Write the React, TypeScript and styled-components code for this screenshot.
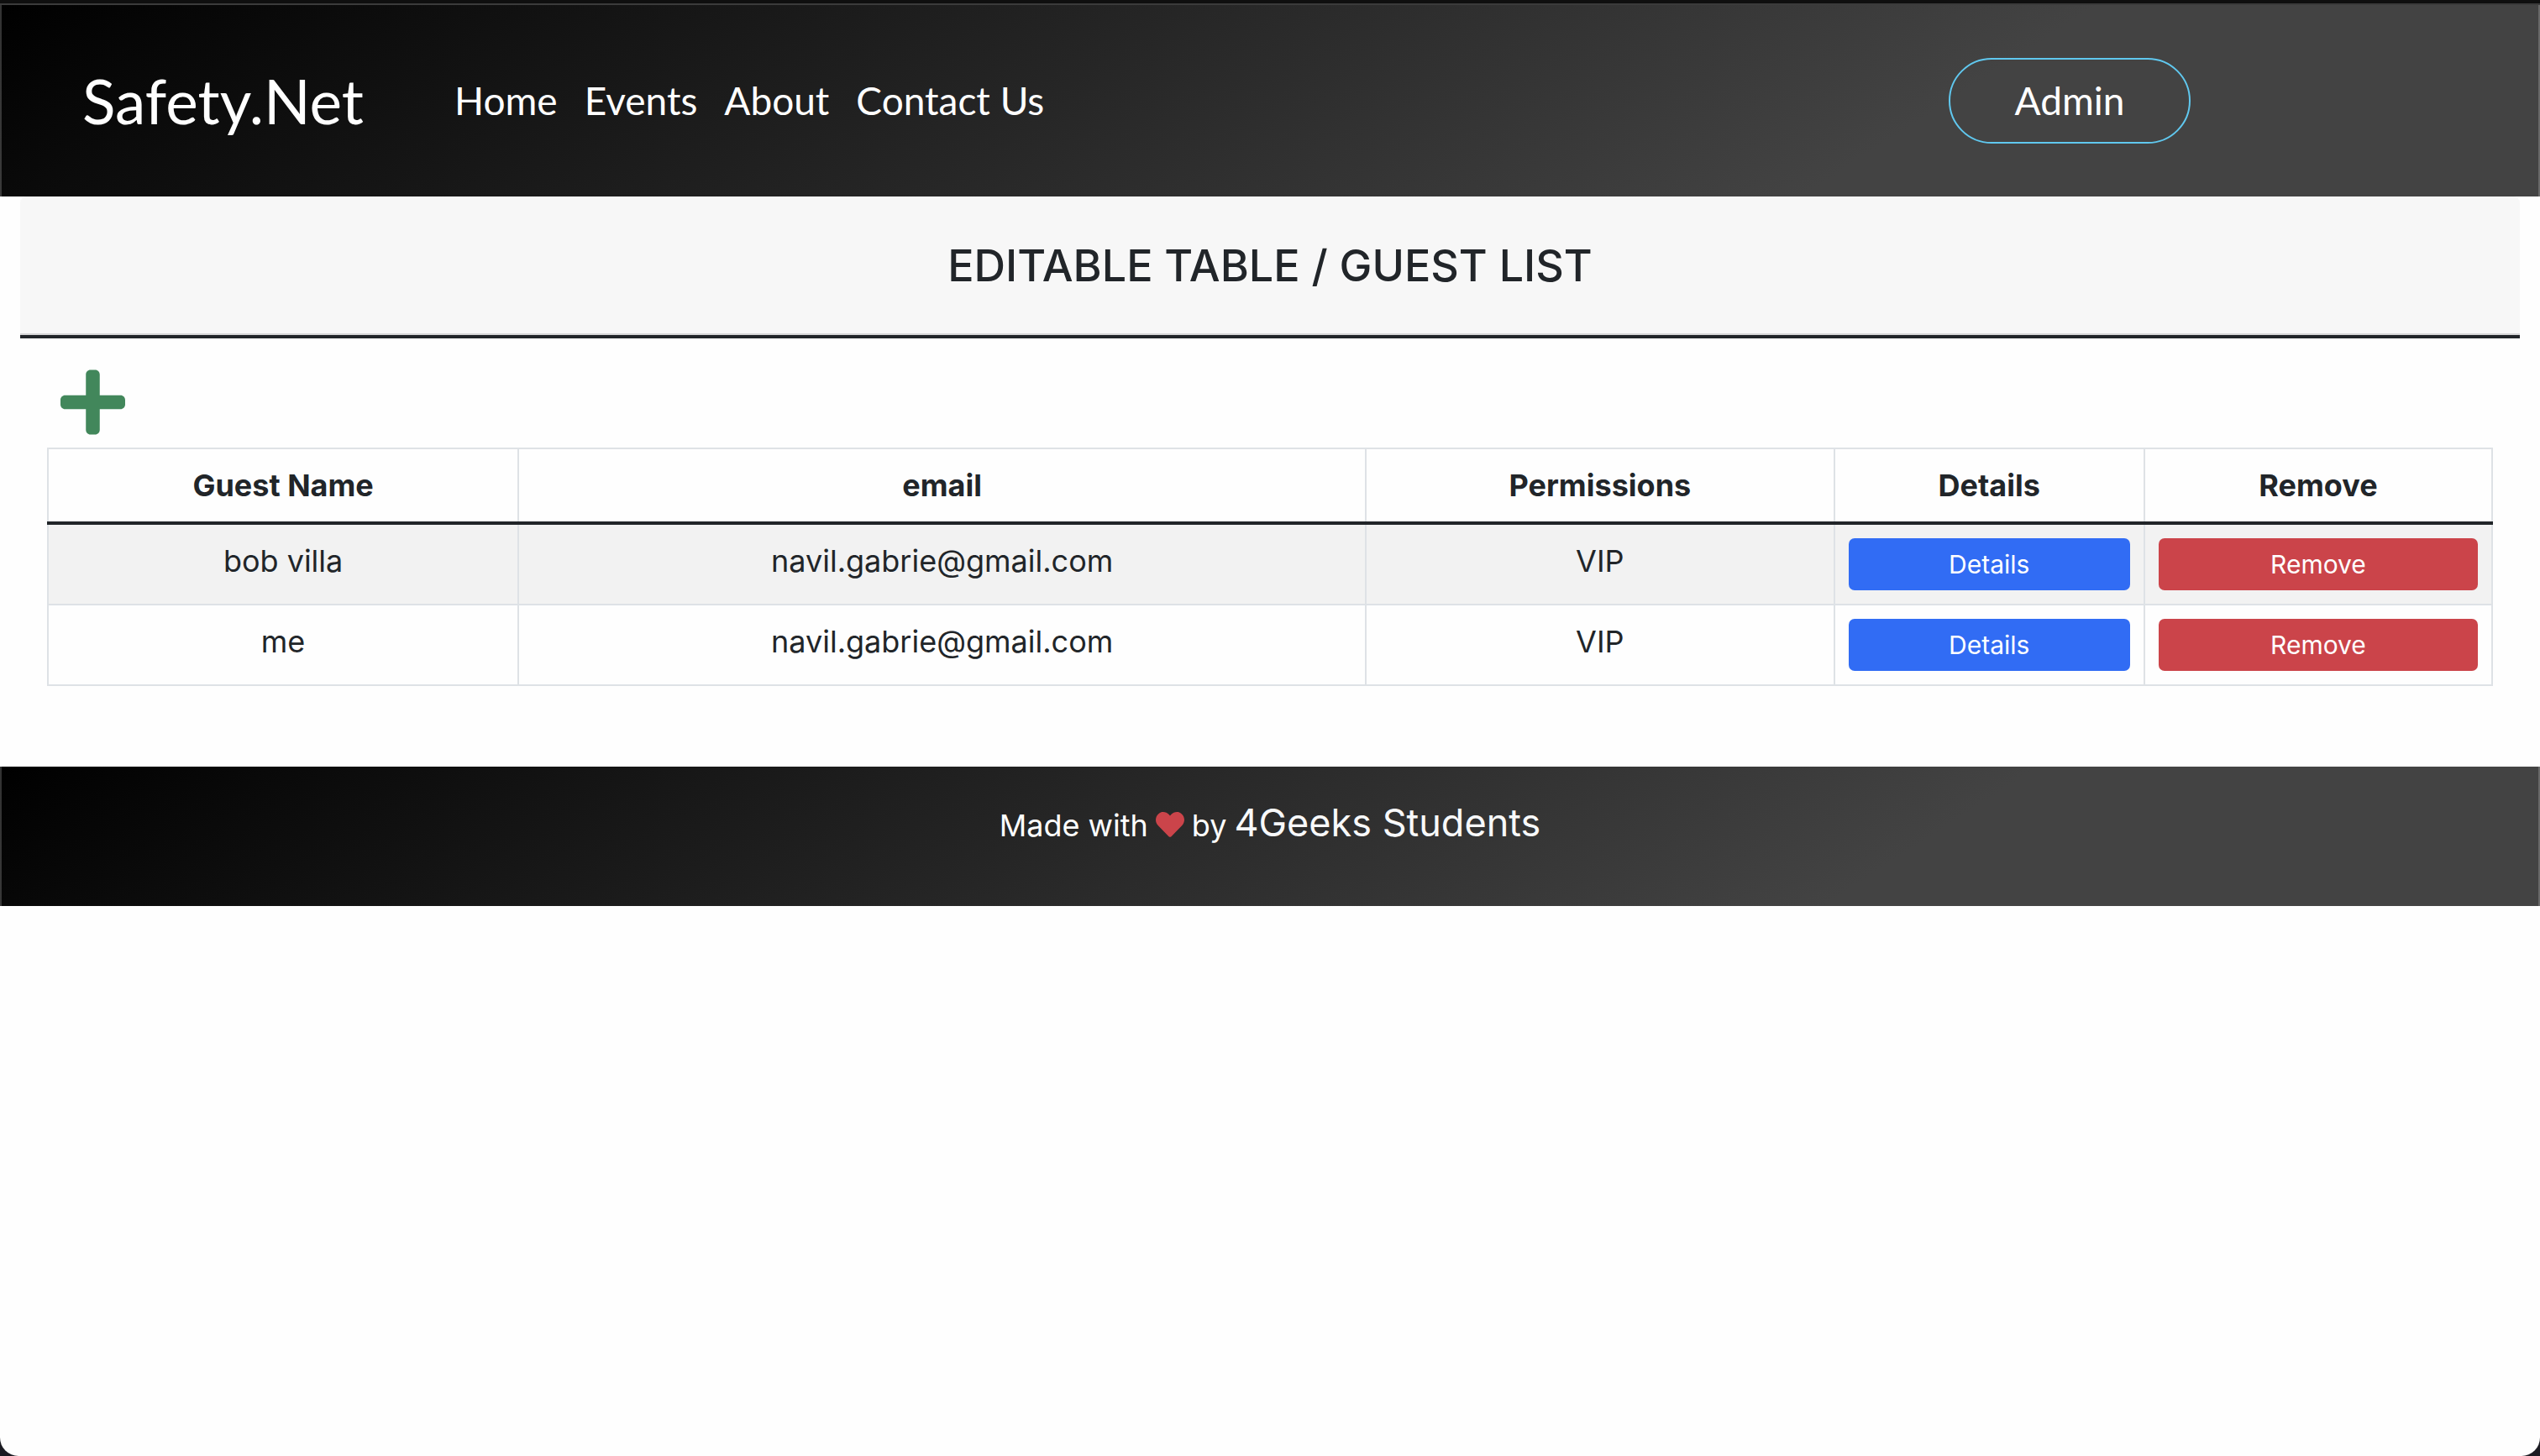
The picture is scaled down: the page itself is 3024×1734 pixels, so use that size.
import React, { useState } from "react";
import styled, { createGlobalStyle } from "styled-components";
import { FaHeart, FaPlus } from "react-icons/fa";

const ink = "#212529";
const line = "#dee2e6";
const bodyFont = `Inter, "Noto Sans", sans-serif`;
const navFont = `Lato, "Noto Sans", sans-serif`;
const barGradient = "linear-gradient(147deg, #000000 0%, #434343 74%)";
const barEdges = "inset 2px 0 rgba(255, 255, 255, 0.2), inset -2px 0 rgba(255, 255, 255, 0.2)";

const GlobalStyle = createGlobalStyle`
  *, *::before, *::after { box-sizing: border-box; }
  body {
    margin: 0;
    background: #1b1b22;
    color: ${ink};
    font-family: ${bodyFont};
    font-size: 36px;
    line-height: 54px;
  }
  button { font-family: inherit; cursor: pointer; }
`;

const Page = styled.div`
  min-height: 100vh;
  background: #fefefe;
  border-top: 4px solid #0f0f0f;
  border-radius: 0 0 22px 22px;
`;

const Header = styled.header`
  display: flex;
  align-items: center;
  padding: 2px 416px 0 98px;
  height: 230px;
  background: ${barGradient};
  box-shadow: inset 0 2px #3b3b3b, ${barEdges};
  font-family: ${navFont};
`;

const Brand = styled.a`
  margin-right: 108px;
  color: #fff;
  font-size: 73px;
  line-height: 96px;
  text-decoration: none;
`;

const Nav = styled.nav`
  display: flex;
  flex: 1;
  gap: 32px;
`;

const NavLink = styled.a`
  color: #fff;
  font-size: 46px;
  line-height: 72px;
  text-decoration: none;
`;

const AdminButton = styled.button`
  width: 288px;
  height: 102px;
  border: 2px solid #60c8ef;
  border-radius: 52px;
  background: transparent;
  color: #fff;
  font-size: 46px;
  line-height: 72px;
`;

const Content = styled.main`
  padding: 0 24px 96px;
`;

const TitleBar = styled.div`
  padding: 48px 32px;
  border-bottom: 4px solid ${ink};
  border-radius: 8px 8px 0 0;
  background: #f7f7f7;
  box-shadow: inset 0 -2px #d6d6d7;
  text-align: center;
`;

const Title = styled.h1`
  margin: 0;
  font-size: 52px;
  font-weight: 500;
  line-height: 69px;
`;

const TableArea = styled.section`
  padding: 28px 32px 0;
`;

const AddButton = styled.button`
  display: flex;
  margin: 0 0 6px;
  padding: 4px 16px;
  border: 0;
  background: transparent;
  color: #42875b;
  font-size: 88px;

  svg { width: 77px; }
`;

const GuestTable = styled.table`
  width: 100%;
  border-collapse: collapse;
  table-layout: fixed;
  text-align: center;
`;

const Column = styled.col<{ $share: number }>`
  width: ${({ $share }) => $share}%;
`;

const HeadCell = styled.th`
  padding: 16px;
  border: 2px solid ${line};
  border-bottom: 4px solid ${ink};
  font-weight: 700;
`;

const Row = styled.tr`
  &:nth-child(odd) { background: #f2f2f2; }
`;

const Cell = styled.td`
  padding: 16px;
  border: 2px solid ${line};
  vertical-align: top;
`;

const ActionButton = styled.button<{ $tone: string }>`
  display: block;
  width: 100%;
  height: 62px;
  padding: 0 16px;
  border: 0;
  border-radius: 7px;
  background: ${({ $tone }) => $tone};
  color: #fff;
  font-size: 30px;
  line-height: 62px;
`;

const Footer = styled.footer`
  display: flex;
  justify-content: center;
  align-items: baseline;
  gap: 9px;
  height: 166px;
  padding-top: 32px;
  background: ${barGradient};
  box-shadow: ${barEdges};
  color: #fff;
`;

const Heart = styled(FaHeart)`
  align-self: flex-start;
  width: 34px;
  height: 34px;
  margin-top: 20px;
  color: #cb444a;
`;

const Credit = styled.a`
  color: #f8f9fa;
  font-size: 45px;
  line-height: 69px;
  text-decoration: none;
`;

const links = ["Home", "Events", "About", "Contact Us"];
const columns = [
  { label: "Guest Name", share: 19.25 },
  { label: "email", share: 34.67 },
  { label: "Permissions", share: 19.16 },
  { label: "Details", share: 12.69 },
  { label: "Remove", share: 14.23 },
];
const initialGuests = [
  { id: 1, name: "bob villa", email: "navil.gabrie@gmail.com", permission: "VIP" },
  { id: 2, name: "me", email: "navil.gabrie@gmail.com", permission: "VIP" },
];

export default function App() {
  const [guests, setGuests] = useState(initialGuests);

  const addGuest = () =>
    setGuests([...guests, { id: Date.now(), name: "", email: "", permission: "VIP" }]);

  return (
    <Page>
      <GlobalStyle />
      <Header>
        <Brand href="#">Safety.Net</Brand>
        <Nav>
          {links.map((label) => (
            <NavLink key={label} href="#">{label}</NavLink>
          ))}
        </Nav>
        <AdminButton type="button">Admin</AdminButton>
      </Header>
      <Content>
        <TitleBar>
          <Title>EDITABLE TABLE / GUEST LIST</Title>
        </TitleBar>
        <TableArea>
          <AddButton type="button" aria-label="Add guest" onClick={addGuest}>
            <FaPlus />
          </AddButton>
          <GuestTable>
            <colgroup>
              {columns.map(({ label, share }) => <Column key={label} $share={share} />)}
            </colgroup>
            <thead>
              <tr>
                {columns.map(({ label }) => <HeadCell key={label} scope="col">{label}</HeadCell>)}
              </tr>
            </thead>
            <tbody>
              {guests.map((guest) => (
                <Row key={guest.id}>
                  <Cell>{guest.name}</Cell>
                  <Cell>{guest.email}</Cell>
                  <Cell>{guest.permission}</Cell>
                  <Cell><ActionButton type="button" $tone="#316cf4">Details</ActionButton></Cell>
                  <Cell>
                    <ActionButton
                      type="button"
                      $tone="#cb444a"
                      onClick={() => setGuests(guests.filter(({ id }) => id !== guest.id))}
                    >
                      Remove
                    </ActionButton>
                  </Cell>
                </Row>
              ))}
            </tbody>
          </GuestTable>
        </TableArea>
      </Content>
      <Footer>
        <span>Made with</span>
        <Heart />
        <span>by</span>
        <Credit href="#">4Geeks Students</Credit>
      </Footer>
    </Page>
  );
}
